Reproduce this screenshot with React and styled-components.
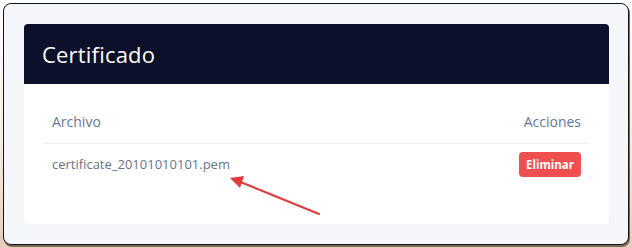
import React from 'react'
import styled, { createGlobalStyle } from 'styled-components'

const GlobalStyle = createGlobalStyle`
  html, body {
    margin: 0;
    padding: 0;
    background: #fff;
  }
`

const Stage = styled.div`
  position: relative;
  width: 632px;
  height: 248px;
  padding: 3px 0 0 3px;
  box-sizing: border-box;
  background: linear-gradient(180deg, #ffffff 0%, #f6ece4 55%, #e6cdbd 100%);
  font-family: 'Open Sans', 'Liberation Sans', sans-serif;
`

const Frame = styled.div`
  width: 626px;
  height: 242px;
  box-sizing: border-box;
  border: 1px solid #161616;
  border-radius: 8px;
  background: #f4f6f9;
  box-shadow: 1px 2px 0 #7d6658;
  padding: 20px 19px 0 20px;
`

const Card = styled.section`
  background: #fff;
  border-radius: 4px;
  height: 200px;
  display: flex;
  flex-direction: column;
`

const CardHeader = styled.header`
  height: 60px;
  background: #0c1029;
  border-radius: 4px 4px 0 0;
  display: flex;
  align-items: center;
  padding: 0 18px;
`

const Title = styled.h2`
  margin: 0;
  color: #fff;
  font-size: 22px;
  font-weight: 400;
  letter-spacing: 0.2px;
`

const CardBody = styled.div`
  padding: 20px 20px;
`

const Table = styled.table`
  width: 100%;
  border-collapse: collapse;
`

const Th = styled.th`
  text-align: ${p => (p.$right ? 'right' : 'left')};
  font-size: 14px;
  font-weight: 400;
  color: #687792;
  line-height: 20px;
  padding: 8px 8px 11px;
  border-bottom: 1px solid #eceff3;
`

const Td = styled.td`
  text-align: ${p => (p.$right ? 'right' : 'left')};
  color: #6b7489;
  font-size: 13px;
  line-height: 25px;
  padding: 8px 8px;
  vertical-align: middle;
`

const DangerButton = styled.button`
  height: 25px;
  padding: 0 7px;
  border: none;
  border-radius: 4px;
  background: #f04f4f;
  color: #fff;
  font-family: inherit;
  font-size: 11.5px;
  font-weight: 700;
  cursor: pointer;
`

const Annotation = styled.svg`
  position: absolute;
  left: 0;
  top: 0;
  pointer-events: none;
`

export default function App() {
  return (
    <>
      <GlobalStyle />
      <Stage>
        <Frame>
          <Card>
            <CardHeader>
              <Title>Certificado</Title>
            </CardHeader>
            <CardBody>
              <Table>
                <thead>
                  <tr>
                    <Th>Archivo</Th>
                    <Th $right>Acciones</Th>
                  </tr>
                </thead>
                <tbody>
                  <tr>
                    <Td>certificate_20101010101.pem</Td>
                    <Td $right>
                      <DangerButton>Eliminar</DangerButton>
                    </Td>
                  </tr>
                </tbody>
              </Table>
            </CardBody>
          </Card>
        </Frame>
        {/* red annotation arrow pointing at the file name */}
        <Annotation width="632" height="248" viewBox="0 0 632 248">
          <line x1="319" y1="214" x2="238" y2="181" stroke="#e23b3b" strokeWidth="2" strokeLinecap="round" />
          <polygon points="230,178 244,176 240,188" fill="#e23b3b" />
        </Annotation>
      </Stage>
    </>
  )
}
